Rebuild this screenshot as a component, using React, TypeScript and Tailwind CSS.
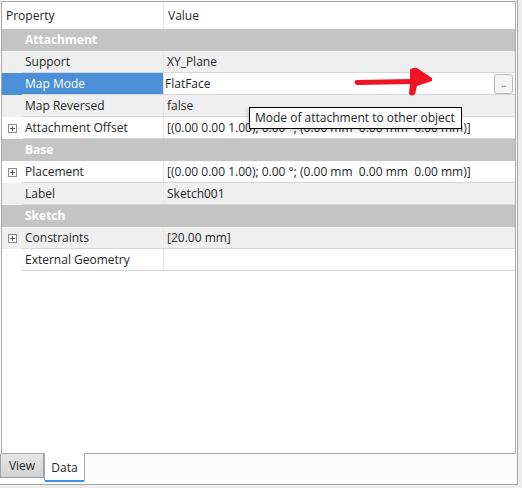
import React from "react"

type Row =
    | { kind: "group"; label: string }
    | { kind: "prop"; label: string; value: string; alt?: boolean; expand?: boolean; selected?: boolean }

const ROWS: Row[] = [
    { kind: "group", label: "Attachment" },
    { kind: "prop", label: "Support", value: "XY_Plane", alt: true },
    { kind: "prop", label: "Map Mode", value: "FlatFace", selected: true },
    { kind: "prop", label: "Map Reversed", value: "false", alt: true },
    { kind: "prop", label: "Attachment Offset", value: "[(0.00 0.00 1.00); 0.00 °; (0.00 mm  0.00 mm  0.00 mm)]", expand: true },
    { kind: "group", label: "Base" },
    { kind: "prop", label: "Placement", value: "[(0.00 0.00 1.00); 0.00 °; (0.00 mm  0.00 mm  0.00 mm)]", expand: true },
    { kind: "prop", label: "Label", value: "Sketch001", alt: true },
    { kind: "group", label: "Sketch" },
    { kind: "prop", label: "Constraints", value: "[20.00 mm]", alt: true, expand: true },
    { kind: "prop", label: "External Geometry", value: "" },
]

const PlusBox = () => (
    <span className="flex h-[9px] w-[9px] items-center justify-center border border-[#8c8c8c] bg-white">
        <svg width="7" height="7" viewBox="0 0 7 7">
            <path d="M3.5 1v5M1 3.5h5" stroke="#555" strokeWidth="1" />
        </svg>
    </span>
)

const App = () => {
    return (
        <div className="relative h-[488px] w-[522px] overflow-hidden bg-[#ececec] font-['Open_Sans',sans-serif] text-[12px] text-[#232627]">
            <div className="flex h-[485px] w-[518px] flex-col border-r border-b border-[#a8a8a8] bg-[#fcfcfc]">
                {/* tree */}
                <div className="ml-[1px] mt-[1px] flex h-[453px] w-[515px] shrink-0 flex-col border border-[#a9a9a9] bg-white">
                    <div className="flex h-[27px] shrink-0 items-center bg-white">
                        <div className="flex h-full w-[162px] items-center border-r border-[#e4e4e4] pl-[4px]">Property</div>
                        <div className="pl-[4px]">Value</div>
                    </div>
                    {ROWS.map((row, i) =>
                        row.kind === "group" ? (
                            <div key={i} className="flex h-[22px] shrink-0 items-center bg-[#c4c4c4] pl-[23px] font-bold text-white">
                                {row.label}
                            </div>
                        ) : (
                            <div key={i} className={`flex h-[22px] shrink-0 ${row.alt ? "bg-[#efefef]" : "bg-white"}`}>
                                <div className={`flex w-[20px] shrink-0 items-center justify-center ${row.selected ? "bg-[#4a90d9]" : ""}`}>
                                    {row.expand && <PlusBox />}
                                </div>
                                <div className="flex min-w-0 flex-1 border-b border-[#d6d6d6]">
                                    <div className={`flex w-[142px] shrink-0 items-center border-r border-[#e6e6e6] pl-[3px] ${row.selected ? "bg-[#4a90d9] text-white" : ""}`}>
                                        {row.label}
                                    </div>
                                    {row.selected ? (
                                        <div className="flex flex-1 items-center justify-between bg-white pl-[1px] pr-[2px]">
                                            <span>{row.value}</span>
                                            <span className="flex h-[20px] w-[19px] items-center justify-center rounded-[3px] border border-[#b8b8b8] bg-[#f4f4f4] text-[10px] leading-none">
                                                <span className="-mt-[2px] tracking-[-1px]">
                                                    <span className="text-[#d14040]">.</span>
                                                    <span className="text-[#3a6fc0]">.</span>
                                                    <span className="text-[#d07030]">.</span>
                                                </span>
                                            </span>
                                        </div>
                                    ) : (
                                        <div className="flex flex-1 items-center overflow-hidden whitespace-pre pl-[3px]">{row.value}</div>
                                    )}
                                </div>
                            </div>
                        )
                    )}
                    <div className="flex-1 bg-white" />
                </div>

                {/* tabs */}
                <div className="flex h-[31px] items-start">
                    <div className="flex h-[24px] w-[44px] items-center justify-center border border-t-0 border-[#a0a0a0] bg-gradient-to-b from-[#e6e6e6] to-[#d2d2d2] pt-[1px]">
                        View
                    </div>
                    <div className="-mt-[1px] flex h-[29px] w-[41px] items-center justify-center rounded-b-[2px] border-x border-[#a9a9a9] border-b-2 border-b-[#3d8ee6] bg-white pt-[3px]">
                        Data
                    </div>
                </div>
            </div>

            {/* red annotation arrow */}
            <svg className="absolute left-[352px] top-[66px]" width="84" height="32" viewBox="0 0 84 32">
                <path d="M5 16.5 L60 15.5" stroke="#ee1422" strokeWidth="5" strokeLinecap="round" fill="none" />
                <path d="M58 4 Q60 1 65 2 L80 12 L80 15 L65 20 L63 28 Q60 31 57 28 L58 16 Z" fill="#ee1422" />
            </svg>

            {/* tooltip */}
            <div className="absolute left-[249px] top-[107px] flex h-[22px] w-[213px] items-center border border-black bg-[#fbfbfb] pl-[5px] shadow-[-2px_2px_4px_rgba(0,0,0,0.15)]">
                Mode of attachment to other object
            </div>
        </div>
    )
}

export default App
